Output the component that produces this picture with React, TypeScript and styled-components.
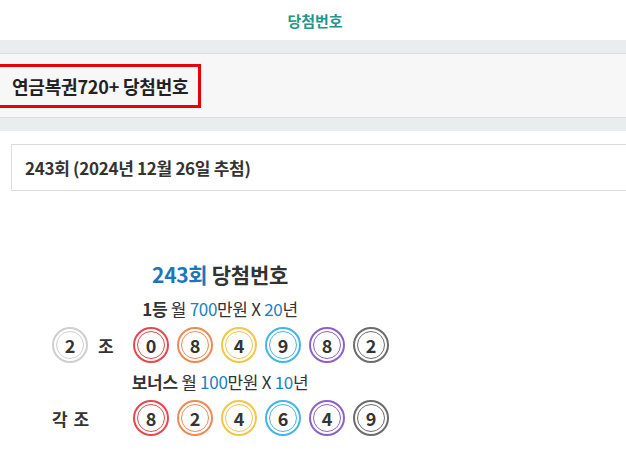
import React from "react";
import styled, { createGlobalStyle } from "styled-components";

const GlobalStyle = createGlobalStyle`
  body {
    margin: 0;
    background: #fff;
    font-family: "Noto Sans CJK KR", "Noto Sans", sans-serif;
    color: #333;
  }
  #root {
    width: 626px;
    height: 464px;
    overflow: hidden;
  }
`;

const Header = styled.div`
  height: 40px;
  display: flex;
  align-items: center;
  justify-content: center;
  font-size: 15px;
  font-weight: 700;
  color: #20978a;
  padding-left: 4px;
`;

const Band = styled.div<{ $top?: boolean }>`
  height: 13px;
  background: #e9eded;
  border-top: ${({ $top }) => ($top ? "none" : "1px solid #dcdfdf")};
  border-bottom: ${({ $top }) => ($top ? "1px solid #dcdfdf" : "none")};
`;

const TitleArea = styled.div`
  height: 63px;
  background: #f7f7f7;
  display: flex;
  align-items: center;
`;

const TitleBox = styled.h1`
  margin: 0;
  height: 44px;
  box-sizing: border-box;
  border: 3px solid #e8000b;
  border-left: none;
  padding: 0 10px 0 12px;
  display: flex;
  align-items: center;
  font-size: 18px;
  font-weight: 700;
  color: #222;
  letter-spacing: -0.2px;
`;

const DrawBox = styled.div`
  margin: 13px -20px 0 11px;
  height: 47px;
  box-sizing: border-box;
  border: 1px solid #dcdcdc;
  display: flex;
  align-items: center;
  padding-left: 13px;
  font-size: 17px;
  font-weight: 700;
  color: #333;
  letter-spacing: -0.3px;
`;

const Result = styled.div`
  width: 440px;
  margin-top: 69px;
  display: flex;
  flex-direction: column;
  align-items: center;
`;

const ResultTitle = styled.h2`
  margin: 0;
  font-size: 21px;
  font-weight: 700;
  color: #333;
  letter-spacing: -0.3px;
  line-height: 28px;
`;

const Blue = styled.span`
  color: #1b76bd;
`;

const Prize = styled.p<{ $gap: number }>`
  margin: ${({ $gap }) => $gap}px 0 0;
  font-size: 17px;
  line-height: 24px;
  color: #333;
  letter-spacing: -0.3px;

  b {
    font-weight: 700;
  }
  span {
    color: #1b80c4;
  }
`;

const BallRow = styled.div`
  width: 440px;
  margin-top: 4px;
  display: grid;
  grid-template-columns: 125px repeat(6, 36px);
  column-gap: 8px;
  align-items: center;
  height: 40px;
`;

const Group = styled.div`
  display: flex;
  align-items: center;
  font-size: 17px;
  font-weight: 700;
  color: #333;
`;

const GroupLabel = styled.span<{ $wide?: boolean }>`
  margin-left: ${({ $wide }) => ($wide ? "52px" : "10px")};
  letter-spacing: ${({ $wide }) => ($wide ? "1px" : "0")};
`;

const Ball = styled.div<{ $color: string; $offset?: number }>`
  position: relative;
  width: 36px;
  height: 36px;
  margin-left: ${({ $offset }) => $offset ?? 0}px;
  box-sizing: border-box;
  border-radius: 50%;
  border: 2px solid ${({ $color }) => $color};
  display: flex;
  align-items: center;
  justify-content: center;
  font-size: 18px;
  font-weight: 700;
  color: #333;
  background: #fff;

  &::before {
    content: "";
    position: absolute;
    inset: 2px;
    border-radius: 50%;
    border: 1px solid ${({ $color }) => $color};
  }
`;

const colors = ["#e5484d", "#ee8a55", "#f3c64a", "#45b4e8", "#8c62c9", "#6c6c6c"];

const first = [0, 8, 4, 9, 8, 2];
const bonus = [8, 2, 4, 6, 4, 9];

export default function App() {
  return (
    <>
      <GlobalStyle />
      <Header>당첨번호</Header>
      <Band $top />
      <TitleArea>
        <TitleBox>연금복권720+ 당첨번호</TitleBox>
      </TitleArea>
      <Band />
      <DrawBox>243회 (2024년 12월 26일 추첨)</DrawBox>
      <Result>
        <ResultTitle>
          <Blue>243회</Blue> 당첨번호
        </ResultTitle>
        <Prize $gap={9}>
          <b>1등</b> 월 <span>700</span>만원 X <span>20</span>년
        </Prize>
        <BallRow>
          <Group>
            <Ball $color="#cfcfcf" $offset={52}>
              2
            </Ball>
            <GroupLabel>조</GroupLabel>
          </Group>
          {first.map((n, i) => (
            <Ball key={i} $color={colors[i]}>
              {n}
            </Ball>
          ))}
        </BallRow>
        <Prize $gap={5}>
          <b>보너스</b> 월 <span>100</span>만원 X <span>10</span>년
        </Prize>
        <BallRow>
          <Group>
            <GroupLabel $wide>각 조</GroupLabel>
          </Group>
          {bonus.map((n, i) => (
            <Ball key={i} $color={colors[i]}>
              {n}
            </Ball>
          ))}
        </BallRow>
      </Result>
    </>
  );
}
